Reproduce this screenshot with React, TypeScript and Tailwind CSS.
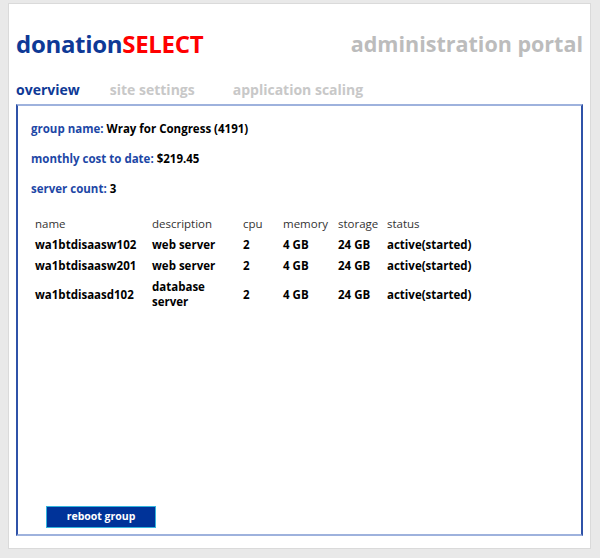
// App.tsx — donationSELECT administration portal, overview tab

const servers = [
  { name: 'wa1btdisaasw102', description: 'web server', cpu: '2', memory: '4 GB', storage: '24 GB', status: 'active(started)' },
  { name: 'wa1btdisaasw201', description: 'web server', cpu: '2', memory: '4 GB', storage: '24 GB', status: 'active(started)' },
  { name: 'wa1btdisaasd102', description: 'database server', cpu: '2', memory: '4 GB', storage: '24 GB', status: 'active(started)' },
];

function InfoLine({ label, value }: { label: string; value: string }) {
  return (
    <div className="h-[30px] text-[11.5px] font-bold leading-[16px]">
      <span className="text-[#1d47a6]">{label}</span> <span className="text-black">{value}</span>
    </div>
  );
}

export default function App() {
  return (
    <div
      className="h-[558px] w-[600px] bg-[#e9e9e9] pl-2 pt-[3px]"
      style={{ fontFamily: '"Open Sans", "Noto Sans", sans-serif' }}
    >
      <div className="flex h-[546px] w-[583px] flex-col border border-[#dadada] bg-white pl-[7px] pr-[7px] pb-[12px]">
        {/* header */}
        <div className="flex h-[54px] items-end justify-between pb-[2px]">
          <div className="text-[24px] font-bold leading-none tracking-[-0.3px]">
            <span className="text-[#0e3996]">donation</span>
            <span className="text-[#ff0000]">SELECT</span>
          </div>
          <div className="mb-[2px] text-[21.5px] font-bold leading-none text-[#bcbcbc]">administration portal</div>
        </div>

        {/* tabs */}
        <div className="mt-[25px] flex h-[21px] items-start text-[14px] font-bold leading-none">
          <span className="text-[#0e3996]">overview</span>
          <span className="ml-[30px] text-[#c8c8c8]">site settings</span>
          <span className="ml-[38px] text-[#c8c8c8]">application scaling</span>
        </div>

        {/* content box */}
        <div className="flex flex-1 flex-col border-x-2 border-y-2 border-x-[#2f52a8] border-y-[#9eb2dd] pl-[13px] pt-[15px] pb-[6px]">
          <InfoLine label="group name:" value="Wray for Congress (4191)" />
          <InfoLine label="monthly cost to date:" value="$219.45" />
          <InfoLine label="server count:" value="3" />

          <table className="mt-[2px] border-separate border-spacing-0 text-[11.5px] leading-[15px]">
            <thead>
              <tr className="text-left font-normal text-[#333]">
                <th className="w-[117px] px-[4px] py-[3px] font-normal">name</th>
                <th className="w-[91px] px-[4px] py-[3px] font-normal">description</th>
                <th className="w-[40px] px-[4px] py-[3px] font-normal">cpu</th>
                <th className="w-[55px] px-[4px] py-[3px] font-normal">memory</th>
                <th className="w-[49px] px-[4px] py-[3px] font-normal">storage</th>
                <th className="px-[4px] py-[3px] font-normal">status</th>
              </tr>
            </thead>
            <tbody className="font-bold text-black">
              {servers.map((s) => (
                <tr key={s.name}>
                  <td className="px-[4px] py-[3px] align-middle">{s.name}</td>
                  <td className="w-[91px] px-[4px] py-[3px] align-middle">{s.description}</td>
                  <td className="px-[4px] py-[3px] align-middle">{s.cpu}</td>
                  <td className="px-[4px] py-[3px] align-middle">{s.memory}</td>
                  <td className="px-[4px] py-[3px] align-middle">{s.storage}</td>
                  <td className="px-[4px] py-[3px] align-middle">{s.status}</td>
                </tr>
              ))}
            </tbody>
          </table>

          <div className="flex-1" />
          <button className="ml-[15px] h-[22px] w-[110px] border border-[#33b5dd] bg-[#003399] text-[10.5px] font-bold text-white">
            reboot group
          </button>
        </div>
      </div>
    </div>
  );
}
